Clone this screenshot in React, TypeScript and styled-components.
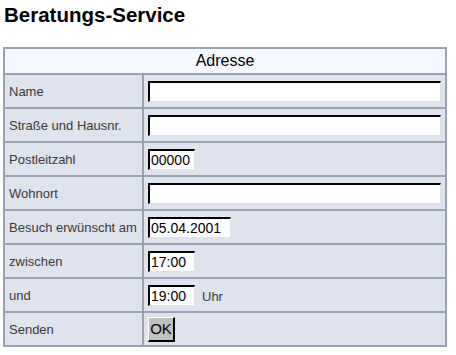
import React from "react";
import styled, { createGlobalStyle } from "styled-components";

const GlobalStyle = createGlobalStyle`
  body {
    margin: 0;
    background: #ffffff;
    font-family: "Liberation Sans", Arial, sans-serif;
  }
`;

type Row = { label: string; value?: string; width?: number; suffix?: string; button?: boolean };

const rows: Row[] = [
  { label: "Name", value: "", width: 293 },
  { label: "Straße und Hausnr.", value: "", width: 293 },
  { label: "Postleitzahl", value: "00000", width: 47 },
  { label: "Wohnort", value: "", width: 293 },
  { label: "Besuch erwünscht am", value: "05.04.2001", width: 83 },
  { label: "zwischen", value: "17:00", width: 47 },
  { label: "und", value: "19:00", width: 47, suffix: "Uhr" },
  { label: "Senden", button: true },
];

const App = () => {
  return (
    <Page>
      <GlobalStyle />
      <Title>Beratungs-Service</Title>
      <Form>
        <colgroup>
          <LabelCol />
          <FieldCol />
        </colgroup>
        <tbody>
          <tr>
            <HeadCell colSpan={2}>Adresse</HeadCell>
          </tr>
          {rows.map((r) => (
            <tr key={r.label}>
              <LabelCell>{r.label}</LabelCell>
              <FieldCell>
                {r.button ? (
                  <OkButton type="button">OK</OkButton>
                ) : (
                  <Field>
                    <TextInput $w={r.width ?? 293} defaultValue={r.value} />
                    {r.suffix && <Suffix>{r.suffix}</Suffix>}
                  </Field>
                )}
              </FieldCell>
            </tr>
          ))}
        </tbody>
      </Form>
    </Page>
  );
};

export default App;

const Page = styled.div`
  padding: 1px 9px 0 3px;
  width: 444px;
`;

const Title = styled.h1`
  margin: 0 0 0 1px;
  height: 46px;
  font-size: 20.5px;
  font-weight: bold;
  line-height: 28px;
  color: #000000;
`;

const Form = styled.table`
  width: 444px;
  border-collapse: separate;
  border-spacing: 2px;
  background: #9aa1b2;
  table-layout: fixed;
`;

const LabelCol = styled.col`
  width: 137px;
`;

const FieldCol = styled.col`
  width: 301px;
`;

const HeadCell = styled.td`
  height: 24px;
  padding: 0;
  background: #f6f7ff;
  text-align: center;
  font-size: 16px;
  color: #000000;
`;

const LabelCell = styled.td`
  height: 32px;
  padding: 0 0 0 4px;
  background: #dee3ed;
  font-size: 13px;
  color: #3a3a3a;
  white-space: nowrap;
`;

const FieldCell = styled.td`
  height: 32px;
  padding: 0 0 0 4px;
  background: #dee3ed;
`;

const Field = styled.div`
  display: flex;
  align-items: center;
  gap: 7px;
`;

const TextInput = styled.input<{ $w: number }>`
  box-sizing: border-box;
  width: ${(p) => p.$w}px;
  height: 21px;
  margin: 0;
  padding: 0 1px;
  background: #ffffff;
  border-style: solid;
  border-width: 2px 1px 1px 2px;
  border-color: #000000 #e2e2e2 #e2e2e2 #000000;
  font-family: "Liberation Sans", Arial, sans-serif;
  font-size: 14px;
  color: #000000;
  outline: none;
`;

const Suffix = styled.span`
  font-size: 13px;
  color: #3a3a3a;
  padding-top: 3px;
`;

const OkButton = styled.button`
  box-sizing: border-box;
  width: 27px;
  height: 25px;
  margin: 0;
  padding: 0;
  background: #c0c0c0;
  border-style: solid;
  border-width: 1px 2px 2px 1px;
  border-color: #ffffff #000000 #000000 #ffffff;
  font-family: "Liberation Sans", Arial, sans-serif;
  font-size: 15px;
  color: #000000;
`;
